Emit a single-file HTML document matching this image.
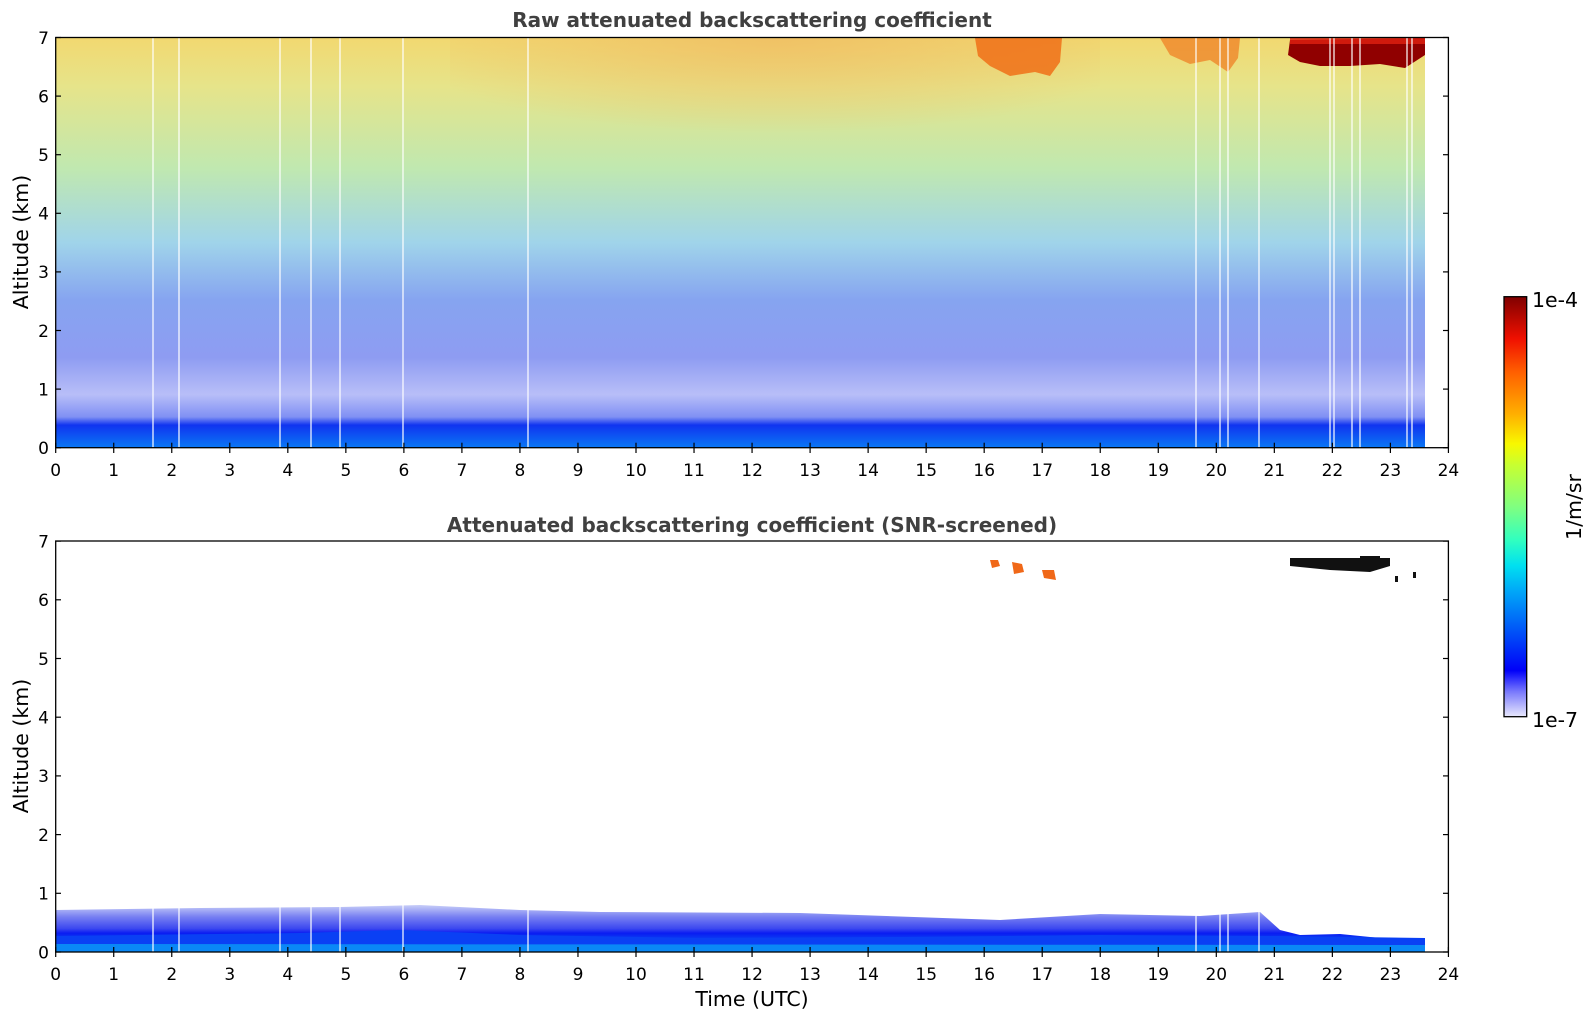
<!DOCTYPE html>
<html><head><meta charset="utf-8"><style>
html,body{margin:0;padding:0;background:#fff;}
svg{display:block;font-family:"DejaVu Sans","Liberation Sans",sans-serif;}
</style></head><body>
<svg id="s" width="1595" height="1020" xmlns="http://www.w3.org/2000/svg">
<defs>
<linearGradient id="gt" x1="0" y1="0" x2="0" y2="1">
<stop offset="0" stop-color="#f2d870"/>
<stop offset="0.12" stop-color="#e6e48a"/>
<stop offset="0.32" stop-color="#c0e8b0"/>
<stop offset="0.5" stop-color="#a0d4ea"/>
<stop offset="0.64" stop-color="#86a4f0"/>
<stop offset="0.78" stop-color="#8e9cf2"/>
<stop offset="0.87" stop-color="#b8bef8"/>
<stop offset="0.925" stop-color="#8090f4"/>
<stop offset="0.945" stop-color="#1034f0"/>
<stop offset="1" stop-color="#0a78f4"/>
</linearGradient>
<radialGradient id="warm" cx="0.5" cy="0" r="0.6">
<stop offset="0" stop-color="#f0b860" stop-opacity="0.7"/>
<stop offset="1" stop-color="#f0b860" stop-opacity="0"/>
</radialGradient>
<linearGradient id="gb" x1="0" y1="0" x2="0" y2="1">
<stop offset="0" stop-color="#c8cef8"/>
<stop offset="0.25" stop-color="#7880f2"/>
<stop offset="0.5" stop-color="#3c48f0"/>
<stop offset="0.6" stop-color="#0a1cf2"/>
<stop offset="0.8" stop-color="#0a50f4"/>
<stop offset="1" stop-color="#0a8cf6"/>
</linearGradient>
<linearGradient id="cb" x1="0" y1="1" x2="0" y2="0">
<stop offset="0" stop-color="#e8e8fc"/>
<stop offset="0.03" stop-color="#b0b0fc"/>
<stop offset="0.06" stop-color="#7878fc"/>
<stop offset="0.09" stop-color="#3030fc"/>
<stop offset="0.11" stop-color="#0000f8"/>
<stop offset="0.2" stop-color="#0050f8"/>
<stop offset="0.3" stop-color="#00a8f8"/>
<stop offset="0.36" stop-color="#00e0f0"/>
<stop offset="0.42" stop-color="#30ffc0"/>
<stop offset="0.5" stop-color="#80ff80"/>
<stop offset="0.6" stop-color="#c8ff30"/>
<stop offset="0.65" stop-color="#f8f800"/>
<stop offset="0.72" stop-color="#ffb000"/>
<stop offset="0.82" stop-color="#ff6000"/>
<stop offset="0.9" stop-color="#f01000"/>
<stop offset="1" stop-color="#800000"/>
</linearGradient>
</defs>

<rect x="55.7" y="37.5" width="1369.3" height="410.2" fill="url(#gt)"/>
<rect x="450" y="37.5" width="650" height="160" fill="url(#warm)"/>
<path d="M975 38 L1062 38 L1060 62 L1050 76 L1035 72 L1010 76 L990 66 L978 56 Z" fill="#f07018" opacity="0.85"/>
<path d="M1160 38 L1240 38 L1238 58 L1228 72 L1210 60 L1190 64 L1170 55 Z" fill="#f07a20" opacity="0.7"/>
<path d="M1290 40 L1425 38 L1425 55 L1405 68 L1380 64 L1350 66 L1320 66 L1300 62 L1288 55 Z" fill="#900000"/>
<path d="M1290 38 L1425 38 L1425 44 L1290 44 Z" fill="#e02010" opacity="0.8"/>
<g stroke="#fff" stroke-width="1.2">
<line x1="153" y1="37" x2="153" y2="448"/><line x1="179" y1="37" x2="179" y2="448"/>
<line x1="280" y1="37" x2="280" y2="448"/><line x1="311" y1="37" x2="311" y2="448"/>
<line x1="340" y1="37" x2="340" y2="448"/><line x1="403" y1="37" x2="403" y2="448"/>
<line x1="528" y1="37" x2="528" y2="448"/><line x1="1196" y1="37" x2="1196" y2="448"/>
<line x1="1220" y1="37" x2="1220" y2="448"/><line x1="1228" y1="37" x2="1228" y2="448"/>
<line x1="1259" y1="37" x2="1259" y2="448"/><line x1="1330" y1="37" x2="1330" y2="448"/>
<line x1="1334" y1="37" x2="1334" y2="448"/><line x1="1352" y1="37" x2="1352" y2="448"/>
<line x1="1360" y1="37" x2="1360" y2="448"/><line x1="1407" y1="37" x2="1407" y2="448"/>
<line x1="1412" y1="37" x2="1412" y2="448"/>
</g>

<path d="M55.7 952 L55.7 910 L200 908 L340 907 L420 905 L520 910 L600 912 L800 913 L1000 920 L1100 914 L1200 916 L1260 912 L1280 930 L1300 935 L1340 934 L1380 938 L1425 938 L1425 952 Z" fill="url(#gb)"/>
<path d="M55.7 952 L55.7 936 L300 933 L400 930 L520 935 L700 938 L900 937 L1100 935 L1280 936 L1425 938 L1425 952 Z" fill="#0a40f4"/>
<path d="M55.7 952 L55.7 944 L1425 945 L1425 952 Z" fill="#0a88f6"/>
<path d="M990 560 l8 0 l2 6 l-8 2 Z M1012 562 l10 2 l2 8 l-10 2 Z M1042 570 l12 0 l2 10 l-12 -2 Z" fill="#f06818"/>
<path d="M1290 558 l100 0 l0 8 l-20 6 l-40 -2 l-40 -4 Z M1360 556 l20 0 l0 4 l-20 0 Z M1395 576 l3 0 l0 6 l-3 0 Z M1413 572 l3 0 l0 6 l-3 0Z" fill="#111"/>
<g stroke="#fff" stroke-width="1.2">
<line x1="153" y1="900" x2="153" y2="952"/><line x1="179" y1="900" x2="179" y2="952"/>
<line x1="280" y1="900" x2="280" y2="952"/><line x1="311" y1="900" x2="311" y2="952"/>
<line x1="340" y1="900" x2="340" y2="952"/><line x1="403" y1="900" x2="403" y2="952"/>
<line x1="528" y1="900" x2="528" y2="952"/><line x1="1196" y1="900" x2="1196" y2="952"/>
<line x1="1220" y1="900" x2="1220" y2="952"/><line x1="1228" y1="900" x2="1228" y2="952"/>
<line x1="1259" y1="900" x2="1259" y2="952"/>
</g>

<rect x="55.7" y="37.5" width="1392.7" height="410.2" fill="none" stroke="#000" stroke-width="1.3"/>
<rect x="55.7" y="541" width="1392.7" height="411" fill="none" stroke="#000" stroke-width="1.3"/>
<g id="ticks" stroke="#000" stroke-width="1.2"></g>

<g font-size="17" fill="#000" text-anchor="middle">
<g>
<text x="55.7" y="476">0</text><text x="113.7" y="476">1</text><text x="171.8" y="476">2</text><text x="229.8" y="476">3</text><text x="287.8" y="476">4</text><text x="345.9" y="476">5</text><text x="403.9" y="476">6</text><text x="461.9" y="476">7</text><text x="519.9" y="476">8</text><text x="578" y="476">9</text><text x="636" y="476">10</text><text x="694" y="476">11</text><text x="752.1" y="476">12</text><text x="810.1" y="476">13</text><text x="868.1" y="476">14</text><text x="926.2" y="476">15</text><text x="984.2" y="476">16</text><text x="1042.2" y="476">17</text><text x="1100.2" y="476">18</text><text x="1158.3" y="476">19</text><text x="1216.3" y="476">20</text><text x="1274.3" y="476">21</text><text x="1332.4" y="476">22</text><text x="1390.4" y="476">23</text><text x="1448.4" y="476">24</text>
</g>
<g>
<text x="55.7" y="980">0</text><text x="113.7" y="980">1</text><text x="171.8" y="980">2</text><text x="229.8" y="980">3</text><text x="287.8" y="980">4</text><text x="345.9" y="980">5</text><text x="403.9" y="980">6</text><text x="461.9" y="980">7</text><text x="519.9" y="980">8</text><text x="578" y="980">9</text><text x="636" y="980">10</text><text x="694" y="980">11</text><text x="752.1" y="980">12</text><text x="810.1" y="980">13</text><text x="868.1" y="980">14</text><text x="926.2" y="980">15</text><text x="984.2" y="980">16</text><text x="1042.2" y="980">17</text><text x="1100.2" y="980">18</text><text x="1158.3" y="980">19</text><text x="1216.3" y="980">20</text><text x="1274.3" y="980">21</text><text x="1332.4" y="980">22</text><text x="1390.4" y="980">23</text><text x="1448.4" y="980">24</text>
</g>
</g>
<g font-size="17" fill="#000" text-anchor="end">
<text x="49" y="454">0</text><text x="49" y="395.4">1</text><text x="49" y="336.8">2</text><text x="49" y="278.2">3</text><text x="49" y="219.6">4</text><text x="49" y="161">5</text><text x="49" y="102.4">6</text><text x="49" y="43.8">7</text>
<text x="49" y="958.3">0</text><text x="49" y="899.6">1</text><text x="49" y="840.9">2</text><text x="49" y="782.2">3</text><text x="49" y="723.5">4</text><text x="49" y="664.8">5</text><text x="49" y="606.1">6</text><text x="49" y="547.3">7</text>
</g>

<text x="752" y="27" font-size="20" font-weight="bold" fill="#404040" text-anchor="middle">Raw attenuated backscattering coefficient</text>
<text x="752" y="532" font-size="20" font-weight="bold" fill="#404040" text-anchor="middle">Attenuated backscattering coefficient (SNR-screened)</text>
<text x="752" y="1006" font-size="20.5" fill="#000" text-anchor="middle">Time (UTC)</text>
<text transform="translate(28,242) rotate(-90)" font-size="20.5" text-anchor="middle">Altitude (km)</text>
<text transform="translate(28,746) rotate(-90)" font-size="20.5" text-anchor="middle">Altitude (km)</text>

<rect x="1504" y="296.7" width="22.7" height="420" fill="url(#cb)" stroke="#000" stroke-width="1.3"/>
<text x="1532" y="307" font-size="20.5">1e-4</text>
<text x="1532" y="727" font-size="20.5">1e-7</text>
<text transform="translate(1581,507) rotate(-90)" font-size="20.5" text-anchor="middle">1/m/sr</text>
</svg>
<script>
var g=document.getElementById('ticks'),s='';
function L(a,b,c,d){s+='<line x1="'+a+'" y1="'+b+'" x2="'+c+'" y2="'+d+'"/>';}
for(var i=0;i<=24;i++){var x=55.7+58.03*i;L(x,447.7,x,453);L(x,442.7,x,447.7);L(x,952,x,957);L(x,947,x,952);}
for(var k=0;k<=7;k++){var y=447.7-58.6*k;L(55.7,y,61,y);L(1443,y,1448.4,y);var y2=952-58.7*k;L(55.7,y2,61,y2);L(1443,y2,1448.4,y2);}
g.innerHTML=s;
</script>
</body></html>
